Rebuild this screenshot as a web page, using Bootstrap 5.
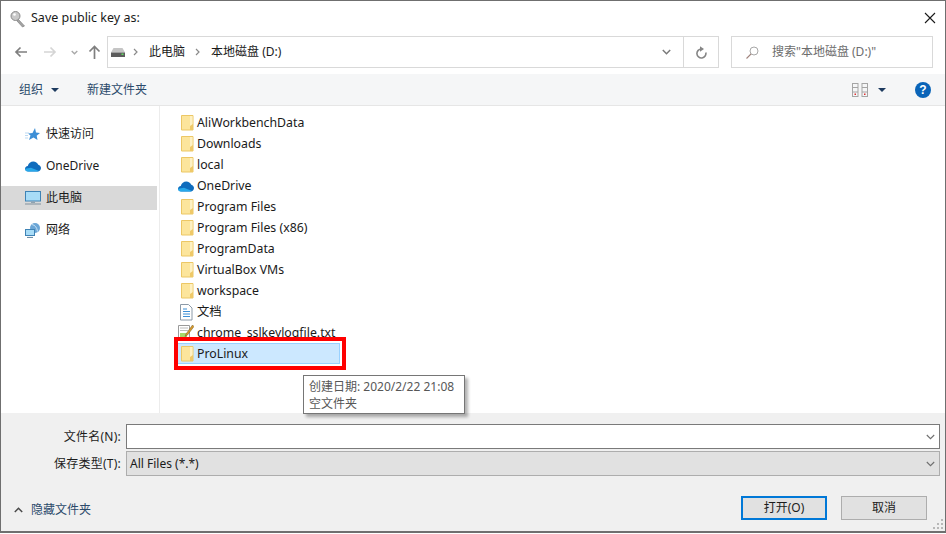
<!DOCTYPE html>
<html lang="zh">
<head>
<meta charset="utf-8">
<title>Save public key as:</title>
<link href="https://cdn.jsdelivr.net/npm/bootstrap@5.3.0/dist/css/bootstrap.min.css" rel="stylesheet">
<style>
html,body{height:100%;margin:0}
body{width:946px;height:534px;overflow:hidden;background:#fff;font-family:"Noto Sans","Noto Sans CJK SC",sans-serif;font-size:12px;line-height:16px;color:#1a1a1a}
.win{width:946px;height:533px;border:1px solid #6f6f6f;border-bottom-width:2px;background:#fff;position:relative;overflow:hidden}
.titlebar{height:35px;padding-left:9px}
.title-text{margin-left:5px;font-size:12.5px;margin-top:-2px}
.close-x{width:14px;height:14px;margin-left:auto;margin-right:8px;margin-top:-1px}
.addrrow{height:32px;padding-left:12px;padding-right:12px}
.navbtns{width:94px}
.back-g{margin-left:1px}
.fwd-g{margin-left:17px}
.down-g{margin-left:14px}
.up-g{margin-left:10px}
.addr{width:612px;height:32px;border:1px solid #d9d9d9;padding-left:3px}
.crumb{color:#1a1a1a;margin-left:11px}
.sep1{margin-left:8px}
.sep2{margin-left:10px}
.addr-end{margin-left:auto;margin-right:12px}
.refresh{width:35px;height:30px;border-left:1px solid #d9d9d9}
.search{width:202px;height:32px;margin-left:12px;border:1px solid #d9d9d9;color:#6d6d6d;padding-left:14px}
.search span{margin-left:13px}
.tools{height:32px;margin-top:6px;background:#f5f6f7;border-bottom:1px solid #e6e6e6;padding-left:18px;color:#2b4a6b;padding-right:14px}
.caret-d{width:0;height:0;border-left:4px solid transparent;border-right:4px solid transparent;border-top:4px solid #1d3a5f}
.toolnew{margin-left:28px}
.viewcaret{margin-left:9px;margin-right:29px}
.mainarea{height:307px;position:relative}
.side{width:159px;border-right:1px solid #ececec;padding-top:16px;flex:none}
.side-item{height:24px;margin-bottom:8px;width:156px;padding-left:24px;color:#1c1c1c}
.side-item.cur{background:#d9d9d9}
.side-item svg{margin-right:5px;flex:none}
.files{padding:6px 0 0 18px;flex:1;font-size:12.3px}
.frow{height:21px;width:163px;white-space:nowrap}
.frow svg{margin-right:3px;flex:none}
.frow.sel{background:#cce8ff;border:1px solid #99d1ff;margin-left:-1px;width:163px;height:21px}
.redbox{position:absolute;left:173px;top:231px;width:172px;height:33px;border:4px solid #f00}
.tip{position:absolute;left:302px;top:269px;width:162px;height:39px;background:#fff;border:1px solid #767676;box-shadow:3px 3px 3px rgba(0,0,0,.3);padding:2px 5px;color:#575757;line-height:17px;font-size:12px;white-space:nowrap;z-index:3}
.bottom{height:119px;background:#f0f0f0;padding-top:11px}
.form-line{height:25px;margin-bottom:2px}
.lab{width:125px;text-align:right;padding-right:5px;color:#1c1c1c;flex:none;letter-spacing:.25px}
.field{width:814px;height:25px;border:1px solid #7a7a7a;background:#fff;padding-left:3px;padding-right:4px;flex:none}
.field.sel-f{background:#e1e1e1;border-color:#adadad}
.chev{margin-left:auto}
.foot{margin-top:20px;height:24px;padding-left:13px;padding-right:18px}
.hide-ic{margin-top:4px}
.hide-t{margin-left:8px;color:#2b4a6b;margin-top:4px}
.wbtn{width:86px;height:24px;background:#e1e1e1;border:1px solid #adadad;border-radius:0;color:#1c1c1c;font-size:12px;line-height:14px;padding:0;margin:0}
.wbtn.def{border:2px solid #0078d7;margin-right:14px}
.grip{position:absolute;right:2px;bottom:2px}
</style>
</head>
<body>
<svg width="0" height="0" class="position-absolute">
<defs>
<symbol id="fold" viewBox="0 0 16 18">
<path d="M3.500 1.500h11.500v14.500h-11.500z" fill="#fce59c" stroke="#ecc765"/>
<path d="M12 2h2.500v13.500H12z" fill="#fef1c4"/>
<path d="M12 12l3-2v6h-3z" fill="#efc968"/>
</symbol>
<symbol id="cloud" viewBox="0 0 16 12">
<path d="M3.500 11.500C1.500 11.500 0 10.300 0 8.700 0 7.200 1.200 6 2.800 5.900 3.500 3.200 5.700 1.500 8.300 1.500c2.300 0 4.200 1.300 5 3.200 1.500.3 2.700 1.700 2.700 3.300 0 1.900-1.500 3.500-3.500 3.500z" fill="#0f6cbd"/>
<path d="M2.500 11.500C1 11.500 0 10.300 0 8.800l6-1 8 3.200c-.5.300-1 .5-1.500.5z" fill="#28a8ea"/>
</symbol>
</defs>
</svg>
<div class="win">
<div class="titlebar d-flex align-items-center">
<svg width="16" height="18" viewBox="0 0 16 18"><circle cx="5.500" cy="6" r="4.500" fill="#c9c9c9" stroke="#8a8a8a"/><circle cx="4.500" cy="4.500" r="1.300" fill="#fff"/><path d="M8.500 9.500l6 6.500-2 1-5.500-6z" fill="#a4a4a4" stroke="#828282" stroke-width=".7"/></svg>
<span class="title-text">Save public key as:</span>
<svg class="close-x" viewBox="0 0 14 14"><path d="M2 2l10 10M12 2L2 12" stroke="#1a1a1a" stroke-width="1.100" fill="none"/></svg>
</div>
<div class="addrrow d-flex align-items-center">
<div class="navbtns d-flex align-items-center">
<svg class="back-g" width="13" height="12" viewBox="0 0 13 12"><path d="M13 6H2M6.500 1.500L2 6l4.500 4.500" stroke="#7f7f7f" stroke-width="1.700" fill="none"/></svg>
<svg class="fwd-g" width="13" height="12" viewBox="0 0 13 12"><path d="M0 6h11M6.500 1.500L11 6l-4.500 4.500" stroke="#d5d5d5" stroke-width="1.700" fill="none"/></svg>
<svg class="down-g" width="7" height="5" viewBox="0 0 7 5"><path d="M.7 1l2.800 2.800L6.300 1" stroke="#a8a8a8" stroke-width="1.300" fill="none"/></svg>
<svg class="up-g" width="13" height="14" viewBox="0 0 13 14"><path d="M6.500 14V2M1.500 6.500l5-5 5 5" stroke="#7f7f7f" stroke-width="1.700" fill="none"/></svg>
</div>
<div class="addr d-flex align-items-center">
<svg width="14" height="9" viewBox="0 0 14 9"><path d="M2.500 0h9l2.500 4.500H0z" fill="#c5c5c5"/><rect y="4.500" width="14" height="4.500" fill="#5c5c5c"/><rect x="10.500" y="5.500" width="2" height="1.500" fill="#5fdc5f"/></svg>
<svg class="sep1" width="5" height="8" viewBox="0 0 5 8"><path d="M1 1l3 3-3 3" stroke="#8a8a8a" stroke-width="1.200" fill="none"/></svg>
<span class="crumb">此电脑</span>
<svg class="sep2" width="5" height="8" viewBox="0 0 5 8"><path d="M1 1l3 3-3 3" stroke="#8a8a8a" stroke-width="1.200" fill="none"/></svg>
<span class="crumb">本地磁盘 (D:)</span>
<svg class="addr-end" width="9" height="6" viewBox="0 0 9 6"><path d="M.8 1l3.700 3.700L8.200 1" stroke="#7a7a7a" stroke-width="1.500" fill="none"/></svg>
<div class="refresh d-flex align-items-center justify-content-center">
<svg width="13" height="13" viewBox="0 0 13 13"><path d="M6.500 3A4.500 4.500 0 1 0 10.800 6.500" stroke="#858585" stroke-width="1.600" fill="none"/><path d="M5 .2l4 2.800-4 2.800z" fill="#858585"/></svg>
</div>
</div>
<div class="search d-flex align-items-center">
<svg width="13" height="13" viewBox="0 0 13 13"><circle cx="8" cy="5" r="4" stroke="#a8a8a8" fill="none"/><path d="M5 8l-4.500 4.500" stroke="#a0847c" stroke-width="1.100"/></svg>
<span>搜索"本地磁盘 (D:)"</span>
</div>
</div>
<div class="tools d-flex align-items-center">
<span>组织</span><span class="caret-d ms-2"></span>
<span class="toolnew">新建文件夹</span>
<svg class="ms-auto" width="17" height="14" viewBox="0 0 17 14"><g fill="none" stroke="#a5a5a5"><rect x=".5" y=".500" width="5.500" height="13"/><rect x="10" y=".500" width="5.500" height="13"/><path d="M.5 4.500h5.500M.5 9h5.500M10 4.500h5.500M10 9h5.500"/></g><path d="M2.500 10.500h1.500v1.500h-1.500zM12 10.500h1.500v1.500H12z" fill="#d33"/></svg>
<span class="caret-d viewcaret"></span>
<svg class="helpi" width="16" height="16" viewBox="0 0 16 16"><circle cx="8" cy="8" r="8" fill="#0a64b8"/><text x="8" y="12.300" text-anchor="middle" fill="#fff" font-size="12" font-weight="700" font-family="Liberation Sans">?</text></svg>
</div>
<div class="mainarea d-flex">
<div class="side">
<div class="side-item d-flex align-items-center"><svg width="16" height="14" viewBox="0 0 16 14"><path d="M10 1l1 4.500 4 .5-3.300 2.700L12.500 13 8.500 10.500 4 13l1.500-4.500L3 6.500l4.500-.5z" fill="#3d8fd6"/><path d="M0 6h4M0 8.500h3M0 11h3" stroke="#bcd9f2"/></svg><span>快速访问</span></div>
<div class="side-item d-flex align-items-center"><svg width="16" height="12"><use href="#cloud"/></svg><span>OneDrive</span></div>
<div class="side-item cur d-flex align-items-center"><svg width="16" height="14" viewBox="0 0 16 14"><rect x=".5" y=".5" width="15" height="9.500" fill="#a8dcf7" stroke="#3f83b5"/><path d="M0 13h16" stroke="#9ea8b0" stroke-width="1.500"/><path d="M6 10.500h4v1.500H6z" fill="#8ea2b0"/></svg><span>此电脑</span></div>
<div class="side-item d-flex align-items-center"><svg width="16" height="15" viewBox="0 0 16 15"><circle cx="10" cy="5" r="5" fill="#6ba6d6"/><path d="M7 1.500c3 .5 5 3 5.500 7" stroke="#c7e2f5" fill="none"/><rect x=".5" y="6.500" width="9" height="6" fill="#a8dcf7" stroke="#3f83b5"/><path d="M2 14.500h6" stroke="#6f8ea6" stroke-width="1.200"/></svg><span>网络</span></div>
</div>
<div class="files">
<div class="frow d-flex align-items-center"><svg width="16" height="18"><use href="#fold"/></svg><span>AliWorkbenchData</span></div>
<div class="frow d-flex align-items-center"><svg width="16" height="18"><use href="#fold"/></svg><span>Downloads</span></div>
<div class="frow d-flex align-items-center"><svg width="16" height="18"><use href="#fold"/></svg><span>local</span></div>
<div class="frow d-flex align-items-center"><svg width="16" height="12"><use href="#cloud"/></svg><span>OneDrive</span></div>
<div class="frow d-flex align-items-center"><svg width="16" height="18"><use href="#fold"/></svg><span>Program Files</span></div>
<div class="frow d-flex align-items-center"><svg width="16" height="18"><use href="#fold"/></svg><span>Program Files (x86)</span></div>
<div class="frow d-flex align-items-center"><svg width="16" height="18"><use href="#fold"/></svg><span>ProgramData</span></div>
<div class="frow d-flex align-items-center"><svg width="16" height="18"><use href="#fold"/></svg><span>VirtualBox VMs</span></div>
<div class="frow d-flex align-items-center"><svg width="16" height="18"><use href="#fold"/></svg><span>workspace</span></div>
<div class="frow d-flex align-items-center"><svg width="16" height="18" viewBox="0 0 16 18"><path d="M2.500 1.500h8l3.500 3.500v12h-11.500z" fill="#fff" stroke="#8c9aa8"/><path d="M5 6h4M5 8.500h7M5 11h7M5 13.500h7" stroke="#3d8fd6"/></svg><span>文档</span></div>
<div class="frow d-flex align-items-center"><svg width="16" height="18" viewBox="0 0 16 18"><path d="M.5 1.500h11v15h-11z" fill="#fff" stroke="#9a9a9a"/><path d="M2 4h8M2 6.500h8" stroke="#bbb"/><path d="M2 9h7v6H2z" fill="#a6d86b"/><path d="M14.500 1L8 10l-1 2.500 2.500-1.500L16 2.500z" fill="#d99a2b" stroke="#6b5a2a" stroke-width=".5"/></svg><span>chrome_sslkeylogfile.txt</span></div>
<div class="frow sel d-flex align-items-center"><svg width="16" height="18"><use href="#fold"/></svg><span>ProLinux</span></div>
</div>
<div class="redbox"></div>
<div class="tip">创建日期: 2020/2/22 21:08<br>空文件夹</div>
</div>
<div class="bottom">
<div class="form-line d-flex align-items-center"><label class="lab">文件名(N):</label><div class="field d-flex align-items-center"><svg class="chev" width="9" height="6" viewBox="0 0 9 6"><path d="M.8 1l3.700 3.700L8.200 1" stroke="#6f6f6f" stroke-width="1.100" fill="none"/></svg></div></div>
<div class="form-line d-flex align-items-center"><label class="lab">保存类型(T):</label><div class="field sel-f d-flex align-items-center"><span>All Files (*.*)</span><svg class="chev" width="9" height="6" viewBox="0 0 9 6"><path d="M.8 1l3.700 3.700L8.200 1" stroke="#6f6f6f" stroke-width="1.100" fill="none"/></svg></div></div>
<div class="foot d-flex align-items-center">
<svg class="hide-ic" width="9" height="6" viewBox="0 0 9 6"><path d="M.8 5l3.700-3.700L8.200 5" stroke="#4a4a4a" stroke-width="1.500" fill="none"/></svg>
<span class="hide-t">隐藏文件夹</span>
<button type="button" class="btn wbtn def ms-auto">打开(O)</button>
<button type="button" class="btn wbtn">取消</button>
</div>
<svg class="grip" width="10" height="10" viewBox="0 0 10 10"><path d="M8 0h2v2H8zM4 4h2v2H4zM8 4h2v2H8zM0 8h2v2H0zM4 8h2v2H4zM8 8h2v2H8z" fill="#b8b8b8"/></svg>
</div>
</div>
</body>
</html>
